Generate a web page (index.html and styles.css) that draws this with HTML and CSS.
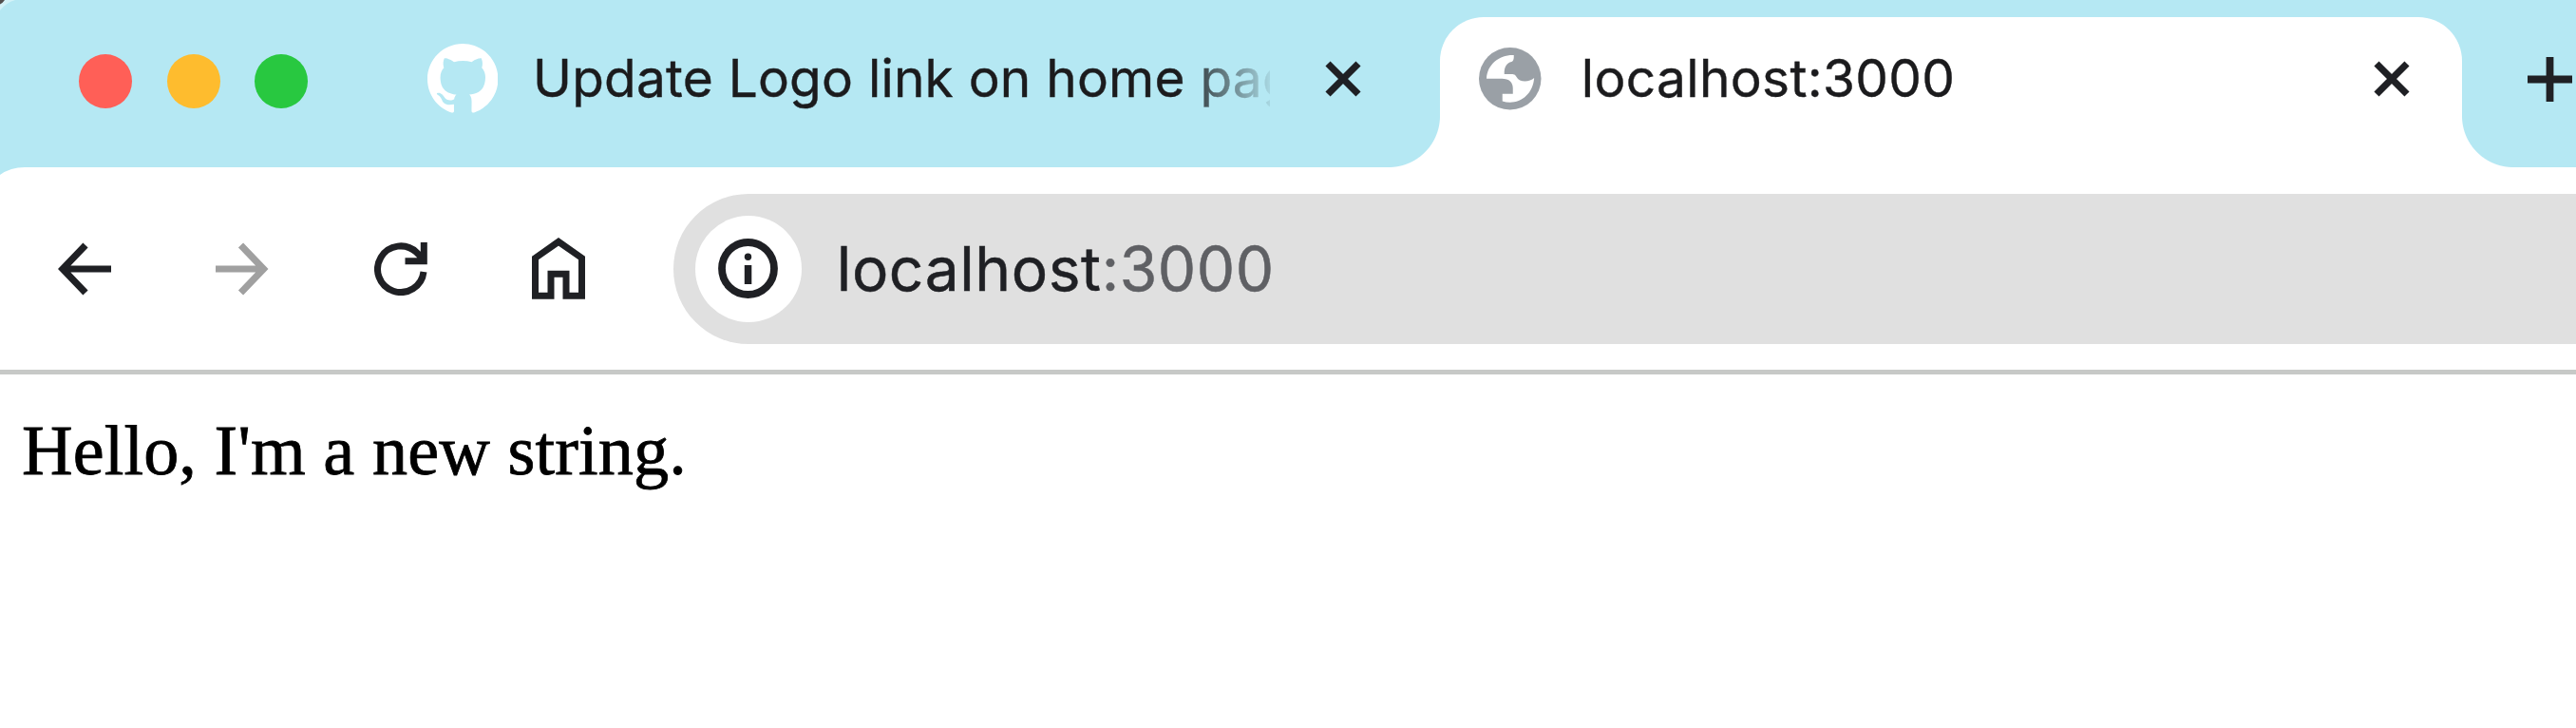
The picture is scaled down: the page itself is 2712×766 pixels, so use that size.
FILE: index.html
```html
<!DOCTYPE html>
<html lang="en">
<head>
<meta charset="utf-8">
<title>localhost:3000</title>
<link rel="stylesheet" href="styles.css">
</head>
<body>
<header class="tab-strip">
  <svg class="window-corner" viewBox="0 0 16 16"><path d="M0 0H16Q6 3 0 11Z" fill="#d3f2f8"/><path d="M0 0H5Q3 3 0 4.5Z" fill="#524e4d"/></svg>
  <svg class="strip-corner" viewBox="0 0 26 8"><path d="M0 0H26Q11 0 0 8Z" fill="#b5e8f3"/></svg>
  <div class="window-controls">
    <span class="control control-close"></span>
    <span class="control control-minimize"></span>
    <span class="control control-zoom"></span>
  </div>
  <div class="tab">
    <svg class="github" viewBox="0 0 16 16"><path fill="#fff" d="M8 0C3.58 0 0 3.58 0 8c0 3.54 2.29 6.53 5.47 7.59.4.07.55-.17.55-.38 0-.19-.01-.82-.01-1.49-2.01.37-2.53-.49-2.69-.94-.09-.23-.48-.94-.82-1.13-.28-.15-.68-.52-.01-.53.63-.01 1.08.58 1.23.82.72 1.21 1.87.87 2.33.66.07-.52.28-.87.51-1.07-1.78-.2-3.64-.89-3.64-3.95 0-.87.31-1.59.82-2.15-.08-.2-.36-1.02.08-2.12 0 0 .67-.21 2.2.82.64-.18 1.32-.27 2-.27s1.36.09 2 .27c1.53-1.04 2.2-.82 2.2-.82.44 1.1.16 1.92.08 2.12.51.56.82 1.27.82 2.15 0 3.07-1.87 3.75-3.65 3.95.29.25.54.73.54 1.48 0 1.07-.01 1.93-.01 2.2 0 .21.15.46.55.38A8.01 8.01 0 0 0 16 8c0-4.42-3.58-8-8-8z"/></svg>
    <span class="tab-title tab-title-faded">Update Logo link on home page</span>
    <svg class="tab-close" viewBox="0 0 38 38"><path d="M3 3L35 35M35 3L3 35"/></svg>
  </div>
  <div class="tab tab-active">
    <svg class="globe" viewBox="0 0 196 196"><circle cx="98" cy="98" r="98" fill="#9aa0a6"/><path fill="#fff" d="M110 24C66 22 26 52 24 98H72C96 98 107 110 107 128V146H74V169C120 184 170 154 174 96C160 109 128 112 118 92Q115 84 106 84H80C79 62 87 48 103 45Q111 42 110 24Z"/></svg>
    <span class="tab-title">localhost:3000</span>
    <svg class="tab-close" viewBox="0 0 38 38"><path d="M3 3L35 35M35 3L3 35"/></svg>
  </div>
  <svg class="new-tab" viewBox="0 0 47 47"><path d="M23.5 0V47M0 23.5H47"/></svg>
</header>
<nav class="toolbar">
  <svg class="nav-icon" viewBox="0 0 56 56"><path d="M56 28H6M29 3L5 28L29 53"/></svg>
  <svg class="nav-icon nav-disabled" viewBox="0 0 56 56"><path d="M0 28H50M26.5 3L50.5 28L26.5 53"/></svg>
  <svg class="nav-icon nav-reload" viewBox="0 0 56 56"><path d="M52 31A24.3 24.3 0 1 1 44.5 10.5L51 17M52.3 0V19.7H32.5"/></svg>
  <svg class="nav-home" viewBox="0 0 56 65"><path d="M3.5 21.5L28 4.3L52.5 21.5V61.3H36V38.2H20V61.3H3.5Z"/></svg>
  <div class="address-bar">
    <span class="site-info"><svg class="info-icon" viewBox="0 0 63 63"><circle cx="31.5" cy="31.5" r="27.5" fill="none" stroke="#1f2024" stroke-width="7.8"/><circle cx="31.5" cy="19.3" r="3.7" fill="#1f2024"/><path d="M27.8 28H35.3V48H27.8Z" fill="#1f2024"/></svg></span>
    <span class="url"><span class="host">localhost</span><span class="port">:3000</span></span>
  </div>
</nav>
<main class="page"><p class="message">Hello, I'm a new string.</p></main>
</body>
</html>
```
FILE: styles.css
```css
* { box-sizing: border-box; }
body { margin: 0; width: 2712px; height: 766px; overflow: hidden; background: #fff; font-family: Inter, "Liberation Sans", sans-serif; }
svg { display: block; flex: none; }
.tab-strip { position: relative; display: flex; height: 176px; background: #b5e8f3; }
.window-corner { position: absolute; left: 0; top: 0; width: 16px; height: 16px; }
.strip-corner { position: absolute; left: 0; top: 176px; width: 26px; height: 8px; }
.window-controls { display: flex; gap: 36.6px; padding: 57px 0 0 83px; width: 449.7px; flex: none; }
.control { width: 56px; height: 57px; border-radius: 50%; }
.control-close { background: #ff5f57; }
.control-minimize { background: #febc2e; }
.control-zoom { background: #28c840; }
.tab { display: flex; width: 1066.3px; flex: none; }
.github { width: 74.4px; height: 74.4px; margin-top: 46px; }
.tab-title { font-size: 55px; line-height: 66px; margin-top: 49px; color: #1b1b1d; white-space: nowrap; letter-spacing: 0.33px; -webkit-text-stroke: 0.4px; }
.tab-title-faded { width: 776px; margin-left: 37px; letter-spacing: 0.2px; overflow: hidden; -webkit-mask-image: linear-gradient(90deg, #000 678px, transparent 785px); mask-image: linear-gradient(90deg, #000 678px, transparent 785px); }
.tab-close { width: 38px; height: 38px; margin: 64.3px 0 0 58px; fill: none; stroke: #1f2024; stroke-width: 7.2; }
.tab-active { position: relative; width: 1075.7px; height: 157.7px; margin-top: 18.3px; padding-left: 41.3px; padding-right: 55px; background: #fff; border-radius: 46px 46px 0 0; }
.tab-active::before, .tab-active::after { content: ""; position: absolute; bottom: 0; width: 54px; height: 54px; }
.tab-active::before { right: 100%; background: radial-gradient(circle at 0 0, transparent 53.5px, #fff 54.5px); }
.tab-active::after { left: 100%; background: radial-gradient(circle at 100% 0, transparent 53.5px, #fff 54.5px); }
.globe { width: 65.5px; height: 65.5px; margin-top: 32px; }
.tab-active .tab-title { margin: 30.7px 0 0 42px; }
.tab-active .tab-close { margin: 46px 0 0 auto; }
.new-tab { width: 47px; height: 47px; margin: 59.8px 0 0 69px; stroke: #1f2024; stroke-width: 7.8; }
.toolbar { display: flex; align-items: center; height: 218px; padding: 0 0 0 60.5px; border-bottom: 5px solid #c7c9c7; }
.nav-icon { width: 56px; height: 56px; margin-right: 110.6px; fill: none; stroke: #1f2024; stroke-width: 7.2; }
.nav-disabled { stroke: #a0a0a0; }
.nav-reload { stroke-width: 7; }
.nav-home { width: 56px; height: 65px; margin-right: 92.5px; fill: none; stroke: #1f2024; stroke-width: 7; }
.address-bar { display: flex; align-items: center; flex: 1; height: 158px; padding-left: 23px; background: #e0e0e0; border-radius: 79px 0 0 79px; }
.site-info { display: grid; place-items: center; width: 112px; height: 112px; border-radius: 50%; background: #fff; }
.info-icon { width: 63px; height: 63px; }
.url { margin-left: 37px; font-size: 64px; line-height: 76px; letter-spacing: 0.6px; color: #1f2024; white-space: nowrap; -webkit-text-stroke: 0.5px; }
.port { color: #5f6064; }
.page { padding: 37.5px 23px; }
.message { margin: 0; font: 74.2px/85px "Liberation Serif", serif; letter-spacing: 0.1px; color: #000; -webkit-text-stroke: 0.8px; }
```
